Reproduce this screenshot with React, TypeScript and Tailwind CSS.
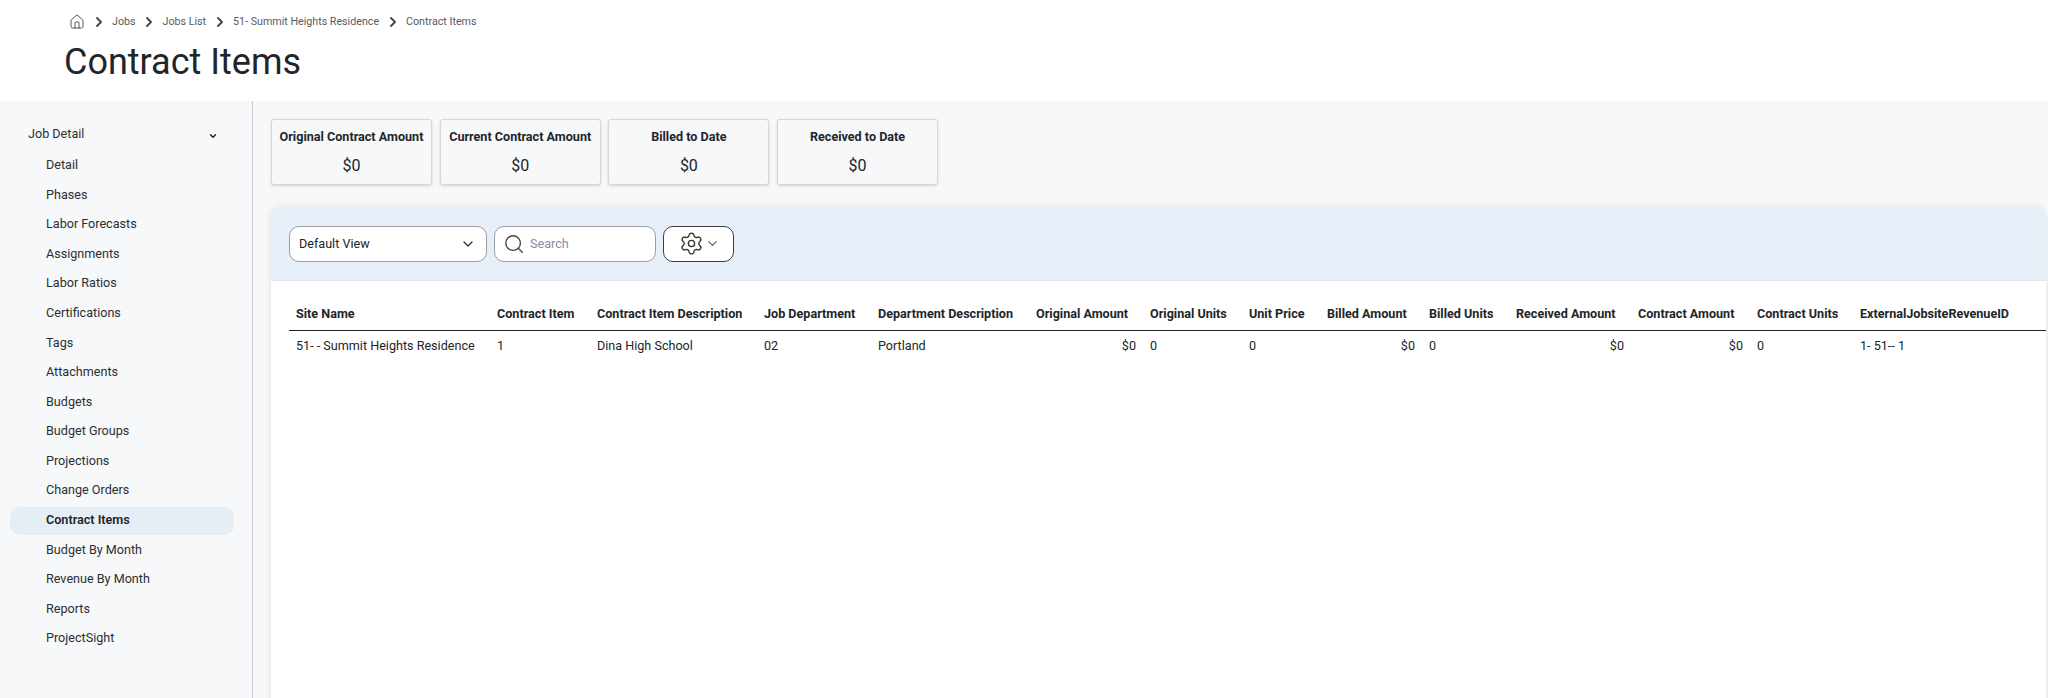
import { ChevronDown, ChevronRight, Home, Search, Settings } from "lucide-react";

const navItems = [
  "Detail",
  "Phases",
  "Labor Forecasts",
  "Assignments",
  "Labor Ratios",
  "Certifications",
  "Tags",
  "Attachments",
  "Budgets",
  "Budget Groups",
  "Projections",
  "Change Orders",
  "Contract Items",
  "Budget By Month",
  "Revenue By Month",
  "Reports",
  "ProjectSight",
];

const crumbs = ["Jobs", "Jobs List", "51- Summit Heights Residence", "Contract Items"];

const stats = ["Original Contract Amount", "Current Contract Amount", "Billed to Date", "Received to Date"];

// widths are written out so tailwind picks them up
const columns = [
  { label: "Site Name", value: "51- - Summit Heights Residence", width: "w-[201px]" },
  { label: "Contract Item", value: "1", width: "w-[100px]" },
  { label: "Contract Item Description", value: "Dina High School", width: "w-[167px]" },
  { label: "Job Department", value: "02", width: "w-[114px]" },
  { label: "Department Description", value: "Portland", width: "w-[158px]" },
  { label: "Original Amount", value: "$0", width: "w-[114px]", right: true },
  { label: "Original Units", value: "0", width: "w-[99px]" },
  { label: "Unit Price", value: "0", width: "w-[78px]" },
  { label: "Billed Amount", value: "$0", width: "w-[102px]", right: true },
  { label: "Billed Units", value: "0", width: "w-[87px]" },
  { label: "Received Amount", value: "$0", width: "w-[122px]", right: true },
  { label: "Contract Amount", value: "$0", width: "w-[119px]", right: true },
  { label: "Contract Units", value: "0", width: "w-[103px]" },
  { label: "ExternalJobsiteRevenueID", value: "1- 51-- 1", width: "w-[193px]" },
];

function Sidebar() {
  return (
    <aside className="w-[253px] shrink-0 border-r border-[#c9ccd1] pt-[18px] pl-[10px]">
      <div className="flex h-[30px] w-[224px] items-center justify-between pl-[18px] pr-[16px] text-[12.6px] text-[#2b2f33]">
        <span>Job Detail</span>
        <ChevronDown className="mt-[3px] h-[10px] w-[10px] text-[#212529]" strokeWidth={3.5} />
      </div>
      <nav className="flex flex-col pt-[2.4px]">
        {navItems.map((item) => (
          <a
            key={item}
            className={
              item === "Contract Items"
                ? "flex h-[28px] mb-[1.6px] w-[224px] items-center rounded-[10px] bg-[#e5edf5] pl-[36px] text-[12.6px] font-semibold text-[#212529]"
                : "flex h-[28px] mb-[1.6px] w-[224px] items-center pl-[36px] text-[12.6px] text-[#2b2f33]"
            }
          >
            {item}
          </a>
        ))}
      </nav>
    </aside>
  );
}

function StatCard({ title }: { title: string }) {
  return (
    <div className="flex h-[66px] w-[161px] flex-col items-center rounded-[3px] border border-[#d5d7db] bg-[#f7f8fa] pt-[8px] shadow-[0_1px_3px_rgba(0,0,0,0.15)]">
      <p className="text-[12.6px] leading-[17px] font-bold whitespace-nowrap text-[#212529]">{title}</p>
      <p className="mt-[11px] text-[16px] leading-[20px] text-[#212529]">$0</p>
    </div>
  );
}

function Toolbar() {
  return (
    <div className="flex h-[74px] items-center rounded-t-[10px] border-b border-[#e0e7f0] bg-[#e6eef8] pl-[18px]">
      <button className="flex h-[36px] w-[198px] items-center justify-between rounded-[10px] border border-[#9a9da1] bg-white pl-[9px] pr-[10px] text-[12.6px] text-[#212529]">
        <span className="pt-[1px]">Default View</span>
        <ChevronDown className="h-[16px] w-[16px] text-[#333]" strokeWidth={2} />
      </button>
      <div className="ml-[7px] flex h-[36px] w-[162px] items-center rounded-[10px] border border-[#9a9da1] bg-white pl-[8px]">
        <Search className="h-[22px] w-[22px] text-[#444]" strokeWidth={1.5} />
        <span className="ml-[5px] pt-[1px] text-[12.6px] text-[#8a8d9e]">Search</span>
      </div>
      <button className="ml-[7px] flex h-[36px] w-[71px] items-center justify-center gap-[1px] rounded-[10px] border border-[#3a3d40] bg-white pl-[1px]">
        <Settings className="h-[25px] w-[25px] text-[#333]" strokeWidth={1.3} />
        <ChevronDown className="h-[15px] w-[15px] text-[#555]" strokeWidth={1.75} />
      </button>
    </div>
  );
}

function ItemsTable() {
  return (
    <table className="w-[1757px] table-fixed border-collapse text-[12.6px] text-[#212529]">
      <thead>
        <tr className="border-b border-[#212529]">
          {columns.map((col) => (
            <th key={col.label} className={`${col.width} h-[33px] pt-[2px] pl-[7px] pr-[16px] text-left font-bold whitespace-nowrap`}>
              {col.label}
            </th>
          ))}
        </tr>
      </thead>
      <tbody>
        <tr>
          {columns.map((col) => (
            <td
              key={col.label}
              className={col.right ? "h-[31px] pt-[2px] px-[7px] text-right whitespace-nowrap" : "h-[31px] pt-[2px] px-[7px] text-left whitespace-nowrap"}
            >
              {col.value}
            </td>
          ))}
        </tr>
      </tbody>
    </table>
  );
}

export default function App() {
  return (
    <div className="flex h-[698px] flex-col overflow-hidden bg-[#f7f8fa] font-['Roboto',sans-serif]">
      <header className="h-[101px] shrink-0 bg-white pl-[64px]">
        <div className="flex h-[44px] items-center text-[10.7px] text-[#555a5f]">
          <Home className="ml-[5px] h-[16px] w-[16px] text-[#555]" strokeWidth={1.5} />
          {crumbs.map((crumb) => (
            <div key={crumb} className="flex items-center">
              <ChevronRight className="mx-[5.5px] h-[16px] w-[16px] text-[#444]" strokeWidth={2.75} />
              <span>{crumb}</span>
            </div>
          ))}
        </div>
        <h1 className="-mt-[3px] text-[36px] leading-[42px] text-[#212529]">Contract Items</h1>
      </header>
      <div className="flex min-h-0 flex-1">
        <Sidebar />
        <main className="min-w-0 flex-1 pt-[18px] pl-[18px] pr-[2px]">
          <div className="flex gap-[7.7px]">
            {stats.map((title) => (
              <StatCard key={title} title={title} />
            ))}
          </div>
          <section className="mt-[22px] h-[600px] rounded-t-[10px] bg-white shadow-[0_0_6px_rgba(0,0,0,0.1)]">
            <Toolbar />
            <div className="pt-[16px] pl-[18px]">
              <ItemsTable />
            </div>
          </section>
        </main>
      </div>
    </div>
  );
}
